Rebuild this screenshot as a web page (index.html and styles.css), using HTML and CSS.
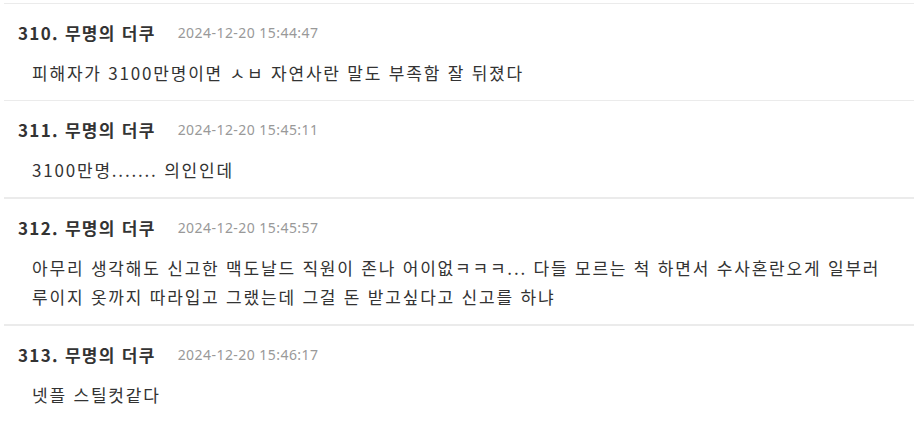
FILE: index.html
```html
<!DOCTYPE html>
<html lang="ko">

<head>
    <meta charset="UTF-8">
    <meta name="viewport" content="width=device-width, initial-scale=1.0">
    <title>댓글</title>
    <link rel="stylesheet" href="styles.css">
</head>

<body>
    <!-- 댓글 목록 -->
    <ul class="comments">
        <li class="comment">
            <div class="info">
                <span class="writer">310. 무명의 더쿠</span>
                <span class="date">2024-12-20 15:44:47</span>
            </div>
            <div class="text">피해자가 3100만명이면 ㅅㅂ 자연사란 말도 부족함 잘 뒤졌다</div>
        </li>
        <li class="comment">
            <div class="info">
                <span class="writer">311. 무명의 더쿠</span>
                <span class="date">2024-12-20 15:45:11</span>
            </div>
            <div class="text">3100만명....... 의인인데</div>
        </li>
        <li class="comment thick">
            <div class="info">
                <span class="writer">312. 무명의 더쿠</span>
                <span class="date">2024-12-20 15:45:57</span>
            </div>
            <div class="text">아무리 생각해도 신고한 맥도날드 직원이 존나 어이없ㅋㅋㅋ... 다들 모르는 척 하면서 수사혼란오게 일부러 루이지 옷까지 따라입고 그랬는데 그걸 돈 받고싶다고 신고를 하냐</div>
        </li>
        <li class="comment thick">
            <div class="info">
                <span class="writer">313. 무명의 더쿠</span>
                <span class="date">2024-12-20 15:46:17</span>
            </div>
            <div class="text">넷플 스틸컷같다</div>
        </li>
    </ul>
</body>

</html>
```

FILE: styles.css
```css
/* 기본 */
* {
    margin: 0;
    padding: 0;
    box-sizing: border-box;
}

body {
    background: #fff;
    font-family: "Noto Sans CJK KR", sans-serif;
    color: #333;
}

.comments {
    list-style: none;
    margin: 3px 7px 0 4px;
}

/* 댓글 한 개 */
.comment {
    border-top: 1px solid #ebebeb;
    padding: 15px 14px 13px;
}

.comment.thick {
    border-top-width: 2px;
}

.info {
    display: flex;
    align-items: center;
    height: 26px;
}

.writer {
    font-size: 17px;
    font-weight: 700;
    letter-spacing: 1.3px;
    color: #333;
    margin-right: 22px;
}

.date {
    font-family: "Noto Sans", sans-serif;
    font-size: 14px;
    letter-spacing: 0.45px;
    color: #999;
    padding-top: 1px;
}

/* 본문, 단어 단위 줄바꿈 */
.text {
    margin-top: 13px;
    padding-left: 14px;
    font-size: 17px;
    letter-spacing: 1.8px;
    line-height: 29px;
    word-break: keep-all;
    color: #333;
}
```
